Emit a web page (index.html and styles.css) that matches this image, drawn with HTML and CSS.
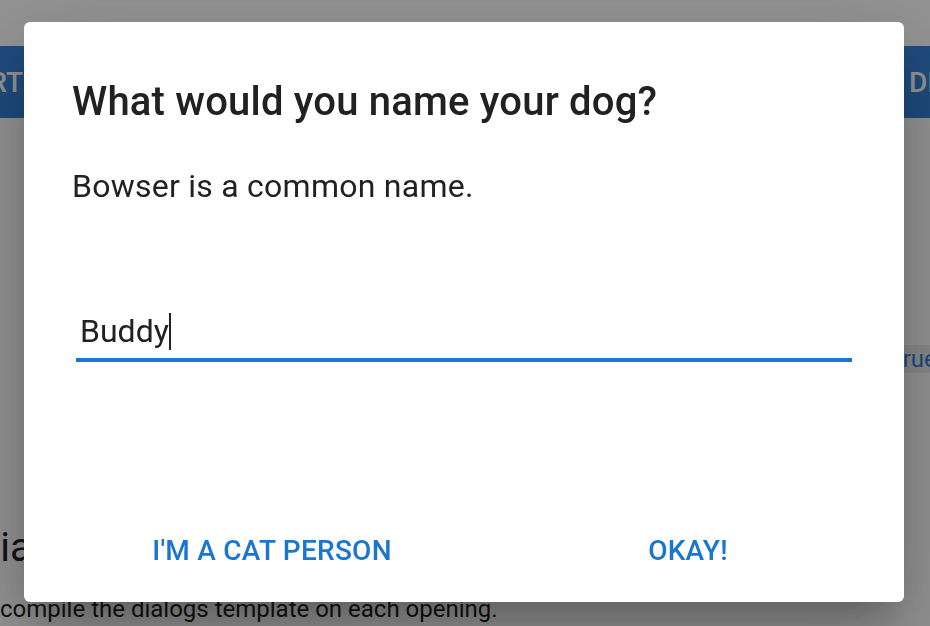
FILE: index.html
```html
<!DOCTYPE html>
<html lang="en">
<head>
<meta charset="utf-8">
<title>Dialog</title>
<link rel="stylesheet" href="styles.css">
</head>
<body>
<div class="page">
  <div class="toolbar">
    <button class="bg-btn bg-btn-left">OPEN ALERT</button>
    <button class="bg-btn bg-btn-right">DIALOG</button>
  </div>
  <p class="code-line">Set option to <code class="code">true</code></p>
  <h2 class="bg-heading">Dialog</h2>
  <p class="bg-text">compile the dialogs template on each opening.</p>
</div>
<div class="backdrop">
  <div class="dialog" role="dialog">
    <h2 class="dialog-title">What would you name your dog?</h2>
    <p class="dialog-text">Bowser is a common name.</p>
    <div class="field">
      <div class="field-input">Buddy<span class="caret"></span></div>
    </div>
    <div class="actions">
      <button class="action">I'M A CAT PERSON</button>
      <button class="action">OKAY!</button>
    </div>
  </div>
</div>
</body>
</html>
```

FILE: styles.css
```css
html, body {
  margin: 0;
  padding: 0;
  height: 100%;
  overflow: hidden;
  background: #ffffff;
  font-family: Roboto, "Noto Sans", Arial, sans-serif;
  color: #212121;
}

.page {
  padding-top: 46px;
}

.toolbar {
  display: flex;
  justify-content: space-between;
  height: 72px;
}

.bg-btn {
  width: 192px;
  height: 72px;
  border: none;
  background: #3482d9;
  color: #ffffff;
  font-family: Roboto, sans-serif;
  font-weight: 500;
  font-size: 28px;
  white-space: nowrap;
  overflow: hidden;
}

.bg-btn-left {
  margin-left: -140px;
  padding: 0 32px 0 0;
  text-align: right;
}

.bg-btn-right {
  margin-right: -139px;
  padding: 0 0 0 32px;
  text-align: left;
}

.code-line {
  margin: 227px 0 0 0;
  padding-left: 600px;
  font-size: 24px;
  line-height: 28px;
  white-space: nowrap;
}

.code {
  font-family: Roboto, sans-serif;
  background: #ededed;
  color: #2a7de0;
  padding: 0 12px 0 6px;
  display: inline-block;
  line-height: 28px;
  margin-left: 147px;
}

.bg-heading {
  margin: 151px 0 0 -26px;
  font-size: 40px;
  font-weight: 400;
  line-height: 48px;
  color: #212121;
}

.bg-text {
  margin: 21px 0 0 0;
  font-size: 24px;
  line-height: 32px;
  color: #212121;
  white-space: nowrap;
}

.backdrop {
  position: fixed;
  inset: 0;
  background: rgba(0, 0, 0, 0.42);
  display: flex;
  align-items: center;
  justify-content: center;
  padding: 0 2px 2px 0;
}

.dialog {
  width: 880px;
  box-sizing: border-box;
  background: #ffffff;
  border-radius: 6px;
  padding: 48px 48px 16px 48px;
  display: flex;
  flex-direction: column;
  box-shadow: 0 22px 30px -14px rgba(0, 0, 0, 0.2),
              0 48px 76px 6px rgba(0, 0, 0, 0.14),
              0 18px 92px 16px rgba(0, 0, 0, 0.12);
}

.dialog-title {
  margin: 0;
  font-size: 40px;
  font-weight: 500;
  line-height: 64px;
  letter-spacing: 0.2px;
  color: #212121;
}

.dialog-text {
  margin: 32px 0 0 0;
  font-size: 32px;
  line-height: 40px;
  letter-spacing: 0.25px;
  color: #212121;
}

.field {
  margin: 105px 4px 0 4px;
}

.field-input {
  font-size: 32px;
  line-height: 40px;
  padding: 0 4px 7px 4px;
  border-bottom: 4px solid #1976d2;
  color: #212121;
}

.caret {
  display: inline-block;
  width: 2px;
  height: 37px;
  background: #212121;
  vertical-align: -8px;
  margin-left: 0;
}

.actions {
  display: flex;
  margin: 152px -40px 0 -8px;
}

.action {
  flex: 1;
  height: 72px;
  border: none;
  background: transparent;
  color: #1976d2;
  font-family: Roboto, sans-serif;
  font-weight: 500;
  font-size: 28px;
  letter-spacing: 0.25px;
  text-align: center;
  padding: 0;
}
```
